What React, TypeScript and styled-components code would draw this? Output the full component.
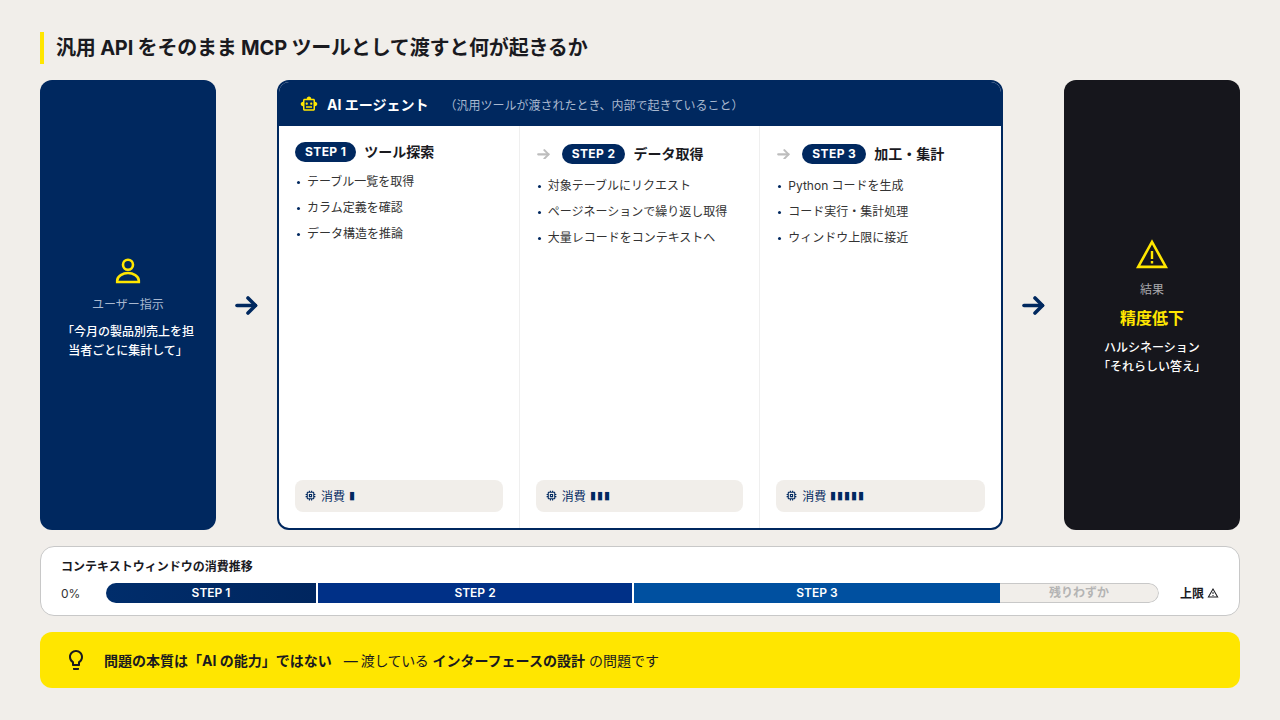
import React from 'react'
import styled, {createGlobalStyle} from 'styled-components'
import {MdMemory, MdOutlineLightbulb, MdOutlineSmartToy, MdOutlineWarningAmber} from 'react-icons/md'

const navy = '#00285f'
const yellow = '#ffe600'

const GlobalStyle = createGlobalStyle`
    html, body, #root {
        width: 100%;
        height: 100%;
        margin: 0;
        padding: 0;
        overflow: hidden;
    }

    body {
        background: #f1eeea;
        color: #1a1a1f;
        font-family: Inter, "Noto Sans CJK JP", sans-serif;
    }

    * {
        box-sizing: border-box;
    }
`

const Page = styled.div`
    display: flex;
    flex-direction: column;
    width: 1280px;
    height: 720px;
    padding: 32px 40px;
`

const Title = styled.h1`
    height: 32px;
    margin: 0 0 16px;
    padding-left: 12px;
    border-left: 4px solid ${yellow};
    font-size: 20px;
    font-weight: 700;
    letter-spacing: -0.2px;
    line-height: 32px;
`

const Flow = styled.div`
    display: flex;
    align-items: stretch;
    height: 450px;
`

const SideCard = styled.section<{$dark?: boolean}>`
    display: flex;
    flex: 0 0 176px;
    flex-direction: column;
    align-items: center;
    justify-content: center;
    padding: 0 20px;
    border-radius: 12px;
    background: ${(p) => (p.$dark ? '#16161c' : navy)};
    text-align: center;

    svg {
        display: block;
    }
`

const SideLabel = styled.div<{$dark?: boolean}>`
    margin-top: ${(p) => (p.$dark ? '9px' : '10px')};
    color: ${(p) => (p.$dark ? '#a8a8ac' : '#a9b8cf')};
    font-size: 12px;
    line-height: 18px;
`

const Quote = styled.div`
    margin-top: 8px;
    color: #fff;
    font-size: 12px;
    font-weight: 500;
    line-height: 19.2px;
`

const Verdict = styled.div`
    margin-top: 7px;
    color: ${yellow};
    font-size: 16px;
    font-weight: 700;
    line-height: 24px;
`

const FlowArrow = styled.div`
    display: flex;
    flex: 1;
    align-items: center;
    justify-content: center;
    color: ${navy};
`

const Agent = styled.section`
    display: flex;
    flex: 0 0 726px;
    flex-direction: column;
    overflow: hidden;
    border: 2px solid ${navy};
    border-radius: 12px;
    background: #fff;
`

const AgentHeader = styled.header`
    display: flex;
    flex: 0 0 44px;
    align-items: center;
    padding-left: 21px;
    background: ${navy};
`

const AgentName = styled.span`
    margin-left: 9px;
    color: #fff;
    font-size: 14px;
    font-weight: 700;
`

const AgentNote = styled.span`
    margin-left: 16px;
    color: #a9b8cf;
    font-size: 12px;
`

const Steps = styled.div`
    display: grid;
    flex: 1;
    grid-template-columns: repeat(3, 1fr);
`

const Step = styled.div`
    display: flex;
    flex-direction: column;
    padding: 16px;
    border-right: 1px solid #efefef;

    &:last-child {
        border-right: 0;
    }
`

const StepHead = styled.div`
    display: flex;
    align-items: center;
    min-height: 20px;
    gap: 8px;
`

const GreyArrow = styled.span`
    display: flex;
    flex: 0 0 16px;
    align-items: center;
    height: 24px;
    margin-right: 2px;
    padding-left: 1px;
    color: #bdbdbd;
`

const Badge = styled.span`
    height: 20px;
    padding: 0 10px;
    border-radius: 10px;
    background: ${navy};
    color: #fff;
    font-size: 12px;
    font-weight: 700;
    letter-spacing: 0.4px;
    line-height: 20px;
`

const StepName = styled.span`
    font-size: 14px;
    font-weight: 700;
    line-height: 20px;
`

const Items = styled.ul`
    flex: 1;
    margin: 5px 0 0;
    padding: 0;
    list-style: none;
`

const Item = styled.li`
    display: flex;
    align-items: center;
    height: 26px;
    color: #333;
    font-size: 12px;

    &::before {
        content: '';
        width: 3px;
        height: 3px;
        margin: 5px 7px 0 2px;
        border-radius: 50%;
        background: ${navy};
    }
`

const Cost = styled.div`
    display: flex;
    align-items: center;
    height: 32px;
    gap: 4px;
    padding: 0 9px 2px;
    border-radius: 8px;
    background: #f1eeea;
    color: ${navy};
    font-size: 12px;
`

const Ticks = styled.span`
    font-size: 11px;
    letter-spacing: 1px;
`

const ContextCard = styled.section`
    height: 70px;
    margin-top: 16px;
    padding: 11px 20px 0;
    border: 1px solid #c8c8c8;
    border-radius: 14px;
    background: #fff;
`

const ContextTitle = styled.div`
    font-size: 12px;
    font-weight: 700;
    line-height: 17px;
`

const BarRow = styled.div`
    display: flex;
    align-items: center;
    margin-top: 8px;
`

const ZeroLabel = styled.span`
    flex: 0 0 45px;
    color: #333;
    font-size: 12px;
`

const Bar = styled.div`
    display: flex;
    flex: 0 0 1053px;
    height: 20px;
    overflow: hidden;
    border-radius: 10px;
`

const Segment = styled.div<{$width: number; $bg: string; $split?: boolean}>`
    flex: 0 0 ${(p) => p.$width}px;
    border-right: ${(p) => (p.$split ? '2px solid #fff' : '0')};
    background: ${(p) => p.$bg};
    color: #fff;
    font-size: 12px;
    font-weight: 600;
    line-height: 20px;
    text-align: center;
`

const Remainder = styled.div`
    flex: 1;
    border: 1px solid #c8c8c8;
    border-left: 0;
    border-radius: 0 10px 10px 0;
    background: #f1eeea;
    color: #b4b4b4;
    font-size: 12px;
    font-weight: 600;
    line-height: 18px;
    text-align: center;
`

const Limit = styled.span`
    display: flex;
    flex: 1;
    align-items: center;
    justify-content: flex-end;
    gap: 3px;
    padding-bottom: 1px;
    font-size: 12px;
    font-weight: 700;
`

const Tip = styled.section`
    display: flex;
    align-items: center;
    height: 56px;
    margin-top: 16px;
    padding: 0 24px 1px;
    border-radius: 12px;
    background: ${yellow};
    font-size: 14px;
`

const TipLead = styled.strong`
    margin: 0 12px 0 16px;
    font-weight: 700;
`

const TipPlain = styled.span`
    letter-spacing: -0.4px;
`

const TipBold = styled.strong`
    margin: 0 4px;
    font-weight: 700;
`

const Arrow = ({width}: {width: number}) => (
    <svg width={width} height={width * 19 / 23} viewBox="0 0 23 19" fill="none" stroke="currentColor"
         strokeWidth="3.6" strokeLinecap="round" strokeLinejoin="round">
        <path d="M2 9.5h18.5"/>
        <path d="M13 2l7.5 7.5L13 17"/>
    </svg>
)

const PersonIcon = () => (
    <svg width="36" height="36" viewBox="0 0 36 36" fill="none" stroke={yellow} strokeWidth="2.6">
        <circle cx="18" cy="14.7" r="5"/>
        <path d="M7.2 32v-1.5c0-4.5 5.8-7.5 10.8-7.5s10.800 3 10.800 7.500V32z"/>
    </svg>
)

const WarningIcon = () => (
    <svg width="38" height="38" viewBox="0 0 38 38" fill={yellow}>
        <path
            fillRule="evenodd"
            d="M19 5.2 35 34.2H3zM19 10.6 7.4 31.6H30.6z"
        />
        <path d="M17.800 17h2.400v8h-2.400zM17.800 27h2.400v2.500h-2.400z"/>
    </svg>
)

const steps = [
    {
        badge: 'STEP 1',
        name: 'ツール探索',
        items: ['テーブル一覧を取得', 'カラム定義を確認', 'データ構造を推論'],
        ticks: '▮',
    },
    {
        badge: 'STEP 2',
        name: 'データ取得',
        items: ['対象テーブルにリクエスト', 'ページネーションで繰り返し取得', '大量レコードをコンテキストへ'],
        ticks: '▮▮▮',
    },
    {
        badge: 'STEP 3',
        name: '加工・集計',
        items: ['Python コードを生成', 'コード実行・集計処理', 'ウィンドウ上限に接近'],
        ticks: '▮▮▮▮▮',
    },
]

const segments = [
    {label: 'STEP 1', width: 212, bg: 'linear-gradient(90deg, #002d6b, #00265f)', split: true},
    {label: 'STEP 2', width: 316, bg: '#003087', split: true},
    {label: 'STEP 3', width: 366, bg: '#0050a0', split: false},
]

export default function App() {
    return (
        <Page>
            <GlobalStyle/>
            <Title>汎用 API をそのまま MCP ツールとして渡すと何が起きるか</Title>
            <Flow>
                <SideCard>
                    <PersonIcon/>
                    <SideLabel>ユーザー指示</SideLabel>
                    <Quote>「今月の製品別売上を担当者ごとに集計して」</Quote>
                </SideCard>
                <FlowArrow><Arrow width={23}/></FlowArrow>
                <Agent>
                    <AgentHeader>
                        <MdOutlineSmartToy size={18} color={yellow}/>
                        <AgentName>AI エージェント</AgentName>
                        <AgentNote>（汎用ツールが渡されたとき、内部で起きていること）</AgentNote>
                    </AgentHeader>
                    <Steps>
                        {steps.map((step, i) => (
                            <Step key={step.badge}>
                                <StepHead>
                                    {i > 0 && <GreyArrow><Arrow width={13}/></GreyArrow>}
                                    <Badge>{step.badge}</Badge>
                                    <StepName>{step.name}</StepName>
                                </StepHead>
                                <Items>
                                    {step.items.map((item) => <Item key={item}>{item}</Item>)}
                                </Items>
                                <Cost>
                                    <MdMemory size={13}/>
                                    消費 <Ticks>{step.ticks}</Ticks>
                                </Cost>
                            </Step>
                        ))}
                    </Steps>
                </Agent>
                <FlowArrow><Arrow width={23}/></FlowArrow>
                <SideCard $dark>
                    <WarningIcon/>
                    <SideLabel $dark>結果</SideLabel>
                    <Verdict>精度低下</Verdict>
                    <Quote>ハルシネーション<br/>「それらしい答え」</Quote>
                </SideCard>
            </Flow>
            <ContextCard>
                <ContextTitle>コンテキストウィンドウの消費推移</ContextTitle>
                <BarRow>
                    <ZeroLabel>0%</ZeroLabel>
                    <Bar>
                        {segments.map((s) => (
                            <Segment key={s.label} $width={s.width} $bg={s.bg} $split={s.split}>{s.label}</Segment>
                        ))}
                        <Remainder>残りわずか</Remainder>
                    </Bar>
                    <Limit>上限 <MdOutlineWarningAmber size={12}/></Limit>
                </BarRow>
            </ContextCard>
            <Tip>
                <MdOutlineLightbulb size={24}/>
                <TipLead>問題の本質は「AI の能力」ではない</TipLead>
                <TipPlain>— 渡している</TipPlain>
                <TipBold>インターフェースの設計</TipBold>の問題です
            </Tip>
        </Page>
    )
}
